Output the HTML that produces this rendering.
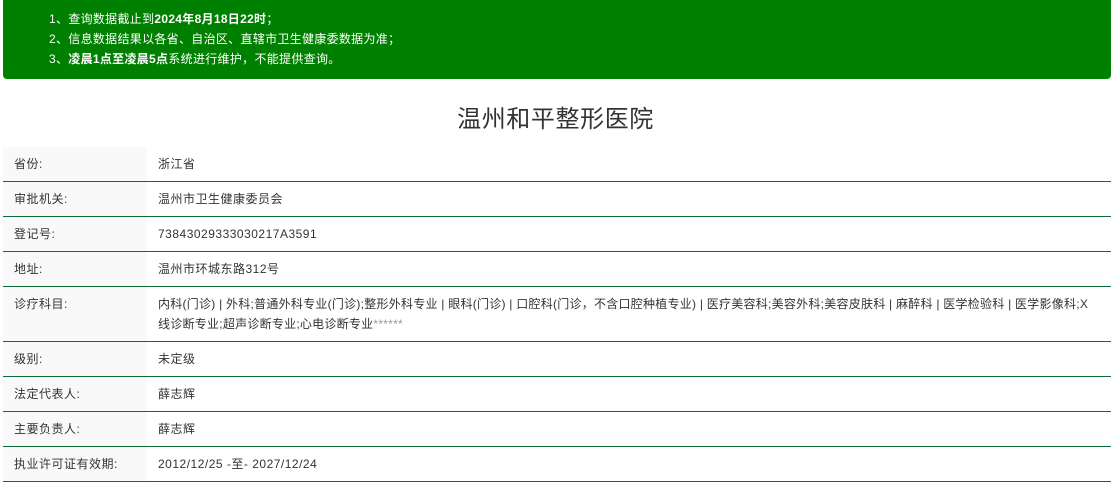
<!DOCTYPE html>
<html><head><meta charset="utf-8"><style>
body{margin:0;background:#fff;font-family:"Liberation Sans","Noto Sans CJK SC",sans-serif;color:#333;width:1111px;height:482px;overflow:hidden}
.ban{position:absolute;left:3px;top:0;width:1108px;height:79px;background:#008000;border-radius:0 0 4px 4px;color:#fff;font-size:12px;letter-spacing:0.3px}
.ban div{position:absolute;left:46px;line-height:20px}
h1{position:absolute;top:102px;left:0;width:1111px;text-align:center;font-size:24px;font-weight:normal;margin:0;line-height:36px;color:#333;letter-spacing:0.6px}
table{position:absolute;left:3px;top:147px;width:1108px;border-collapse:collapse;font-size:12px;letter-spacing:0.5px}
td{border-bottom:1px solid #0d6b3c;padding:0 11px;height:34px;vertical-align:middle;line-height:20px}
td.l{width:122px;background:#f9f9f9}
</style></head><body>
<div class="ban">
<div style="top:9px">1、查询数据截止到<b>2024年8月18日22时</b>；</div>
<div style="top:29px">2、信息数据结果以各省、自治区、直辖市卫生健康委数据为准；</div>
<div style="top:49px">3、<b>凌晨1点至凌晨5点</b>系统进行维护，不能提供查询。</div>
</div>
<h1>温州和平整形医院</h1>
<table>
<tr><td class="l">省份:</td><td>浙江省</td></tr>
<tr><td class="l">审批机关:</td><td>温州市卫生健康委员会</td></tr>
<tr><td class="l">登记号:</td><td>73843029333030217A3591</td></tr>
<tr><td class="l">地址:</td><td>温州市环城东路312号</td></tr>
<tr><td class="l" style="vertical-align:top;padding-top:7px;height:47px">诊疗科目:</td><td style="vertical-align:top;padding-top:7px;height:47px;padding-bottom:0;letter-spacing:0.25px">内科(门诊) | 外科;普通外科专业(门诊);整形外科专业 | 眼科(门诊) | 口腔科(门诊，不含口腔种植专业) | 医疗美容科;美容外科;美容皮肤科 | 麻醉科 | 医学检验科 | 医学影像科;X线诊断专业;超声诊断专业;心电诊断专业<span style="color:#999">******</span></td></tr>
<tr><td class="l">级别:</td><td>未定级</td></tr>
<tr><td class="l">法定代表人:</td><td>薛志辉</td></tr>
<tr><td class="l">主要负责人:</td><td>薛志辉</td></tr>
<tr><td class="l">执业许可证有效期:</td><td>2012/12/25 -至- 2027/12/24</td></tr>
</table>
</body></html>
